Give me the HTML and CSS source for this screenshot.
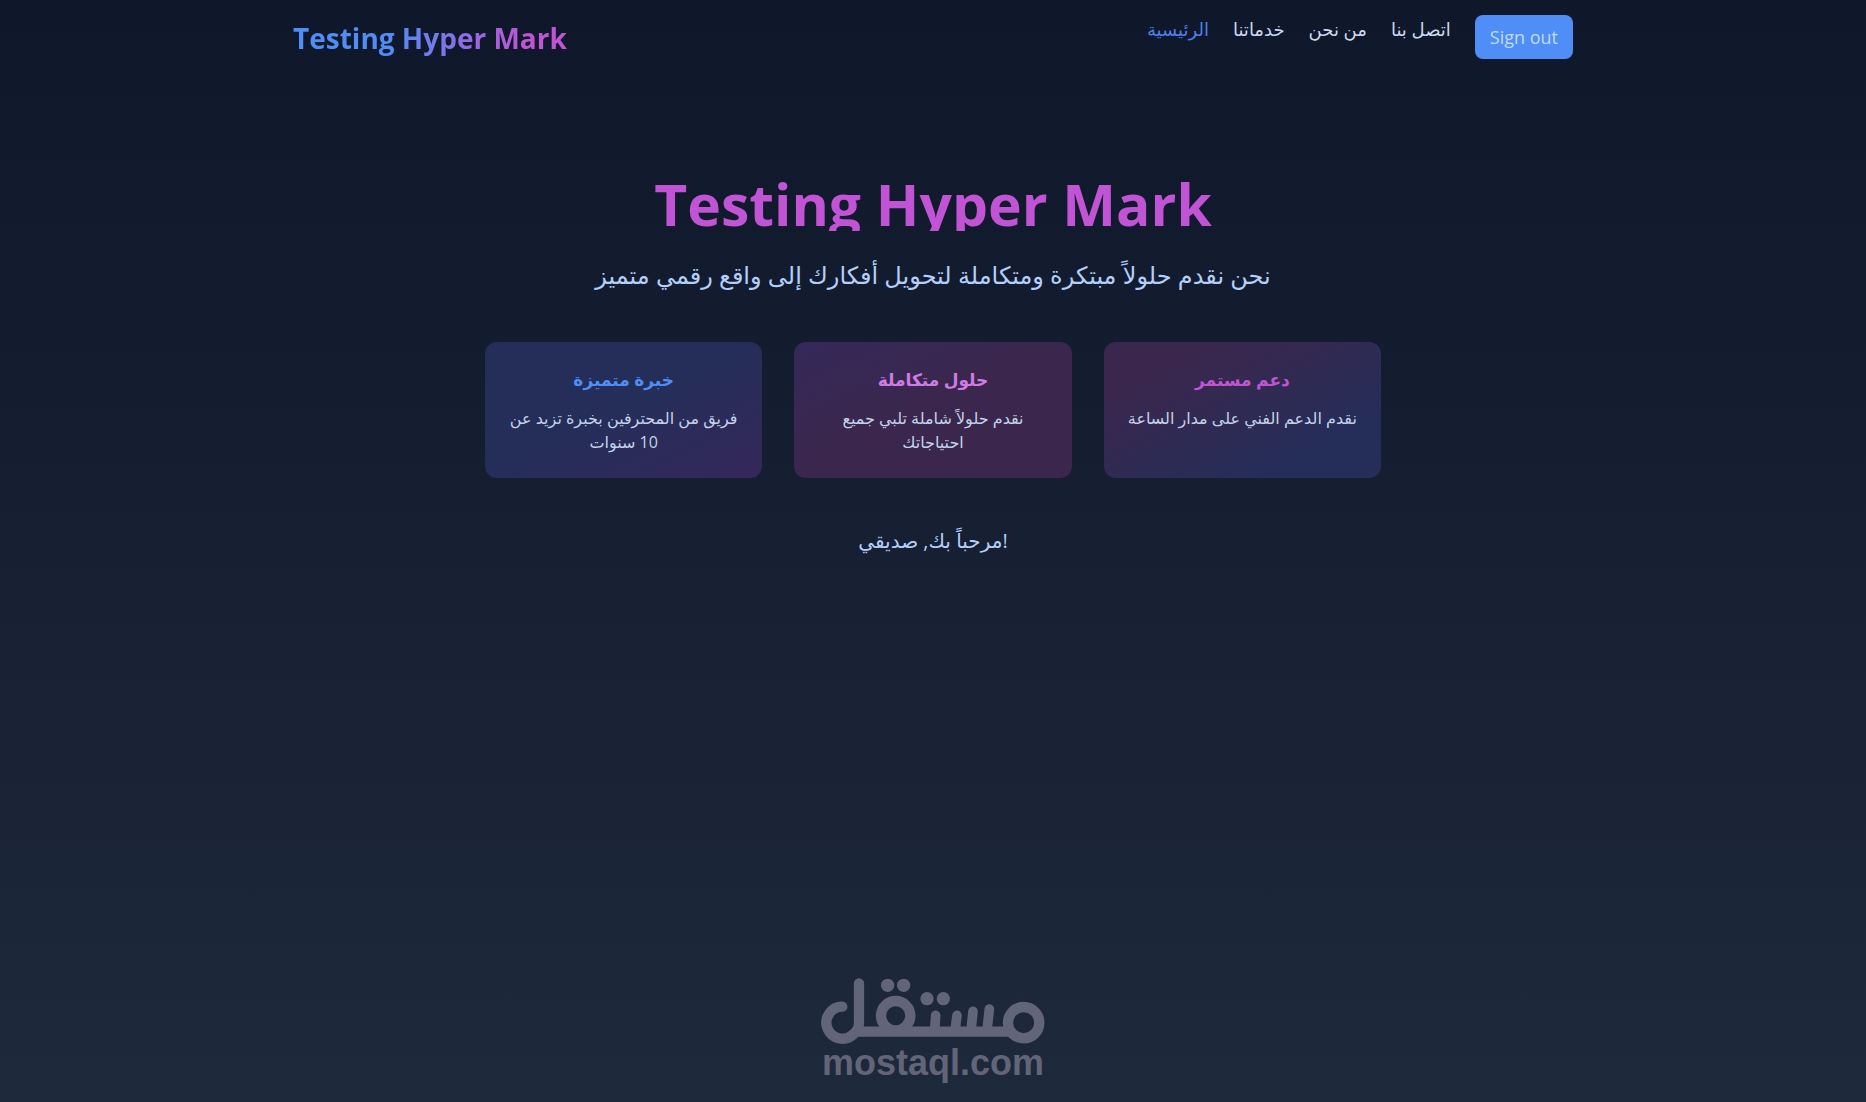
FILE: index.html
```
<!DOCTYPE html>
<html lang="ar">
	<head>
		<meta charset="UTF-8" />
		<meta name="viewport" content="width=device-width, initial-scale=1.0" />
		<title>Testing Hyper Mark</title>
		<link rel="stylesheet" href="styles.css">
	</head>
	<body>
		<header class="header">
			<a class="brand" href="#">Testing Hyper Mark</a>
			<nav class="nav">
				<a class="nav-link active" href="#">الرئيسية</a>
				<a class="nav-link" href="#services">خدماتنا</a>
				<a class="nav-link" href="#about">من نحن</a>
				<a class="nav-link" href="#contact">اتصل بنا</a>
				<button class="sign-out" type="button">Sign out</button>
			</nav>
		</header>

		<main class="hero">
			<h1>Testing Hyper Mark</h1>
			<p class="lead">نحن نقدم حلولاً مبتكرة ومتكاملة لتحويل أفكارك إلى واقع رقمي متميز</p>
			<div class="cards">
				<div class="card card-blue">
					<h2>خبرة متميزة</h2>
					<p>فريق من المحترفين بخبرة تزيد عن 10 سنوات</p>
				</div>
				<div class="card card-purple">
					<h2>حلول متكاملة</h2>
					<p>نقدم حلولاً شاملة تلبي جميع احتياجاتك</p>
				</div>
				<div class="card card-pink">
					<h2>دعم مستمر</h2>
					<p>نقدم الدعم الفني على مدار الساعة</p>
				</div>
			</div>
			<p class="welcome">مرحباً بك, صديقي!</p>
		</main>

		<footer class="footer">
			<svg class="logo" viewBox="63 50 672 198" fill="none" stroke="currentColor" stroke-linecap="round" aria-hidden="true">
				<g stroke-width="31">
					<path d="M127 136 A48 48 0 1 0 161 218 Q177 204 177 184 V66" />
					<path d="M168 211 H640" stroke-linecap="butt" />
					<circle cx="671" cy="184" r="47" />
					<circle cx="287" cy="163" r="44" />
				</g>
				<g stroke-width="29">
					<path d="M404 208 L407 162 M465 208 L471 162 M513 208 L519 150 M561 208 L568 143" />
				</g>
				<g fill="currentColor" stroke="none">
					<circle cx="263" cy="72" r="20" />
					<circle cx="311" cy="72" r="20" />
					<circle cx="381" cy="112" r="20" />
					<circle cx="430" cy="112" r="20" />
				</g>
			</svg>
			<span class="logo-name">mostaql.com</span>
		</footer>
	</body>
</html>
```

FILE: styles.css
```
* {
	box-sizing: border-box;
}
body {
	display: flex;
	flex-direction: column;
	min-height: 100vh;
	margin: 0;
	font-family: "Open Sans", "DejaVu Sans", sans-serif;
	font-size: 16px;
	line-height: 24px;
	color: #b3cffc;
	background: linear-gradient(to bottom, #0f172a, #1e293b);
}
h1,
h2,
p {
	margin: 0;
}
.header {
	display: flex;
	justify-content: space-between;
	width: 100%;
	max-width: 1312px;
	margin: 0 auto;
	padding: 15px 16px;
}
.brand {
	align-self: center;
	padding-top: 2px;
	font-size: 28px;
	line-height: 36px;
	font-weight: 700;
	text-decoration: none;
	color: transparent;
	background: linear-gradient(to right, #4f8df7 35%, #c154d4 85%);
	-webkit-background-clip: text;
	background-clip: text;
}
.nav {
	display: flex;
	align-items: flex-start;
	gap: 24px;
}
.nav-link {
	padding: 2px 0;
	font-size: 18px;
	text-decoration: none;
	color: #cbd9ef;
}
.nav-link.active {
	color: #4f7fe8;
}
.sign-out {
	padding: 8px 15px;
	border: none;
	border-radius: 8px;
	font-family: inherit;
	font-size: 18px;
	line-height: 28px;
	color: #bfdbfe;
	background-color: #4f8df7;
	cursor: pointer;
}
.hero {
	flex: 1;
	width: 100%;
	max-width: 928px;
	margin: 0 auto;
	padding: 97px 16px 48px;
	text-align: center;
}
.hero h1 {
	margin-bottom: 28px;
	padding-top: 6px;
	font-size: 57px;
	line-height: 54px;
	color: transparent;
	background-color: #c154d4;
	-webkit-background-clip: text;
	background-clip: text;
}
.lead {
	font-size: 24px;
	line-height: 32px;
}
.cards {
	display: grid;
	grid-template-columns: repeat(3, 1fr);
	gap: 32px;
	margin: 51px 0 48px;
}
.card {
	padding: 24px;
	border-radius: 12px;
}
.card h2 {
	margin-bottom: 12px;
	font-size: 17px;
	line-height: 28px;
}
.card p {
	color: #c3d3ea;
}
.card-blue {
	background: linear-gradient(to bottom right, #242e59 45%, #35285a);
}
.card-blue h2 {
	color: #4f8df7;
}
.card-purple {
	background: linear-gradient(to bottom right, #34295a, #3b274d 45%);
}
.card-purple h2 {
	color: #cf7be6;
}
.card-pink {
	background: linear-gradient(to bottom right, #3b274d 20%, #242e59 80%);
}
.card-pink h2 {
	color: #c154d4;
}
.welcome {
	font-size: 20px;
	line-height: 30px;
}
.footer {
	display: flex;
	flex-direction: column;
	align-items: center;
	padding-bottom: 20px;
	color: #626478;
}
.logo {
	width: 224px;
	height: 66px;
}
.logo-name {
	font-family: "Liberation Sans", Arial, sans-serif;
	font-size: 36px;
	line-height: 38px;
	font-weight: 700;
}
```
